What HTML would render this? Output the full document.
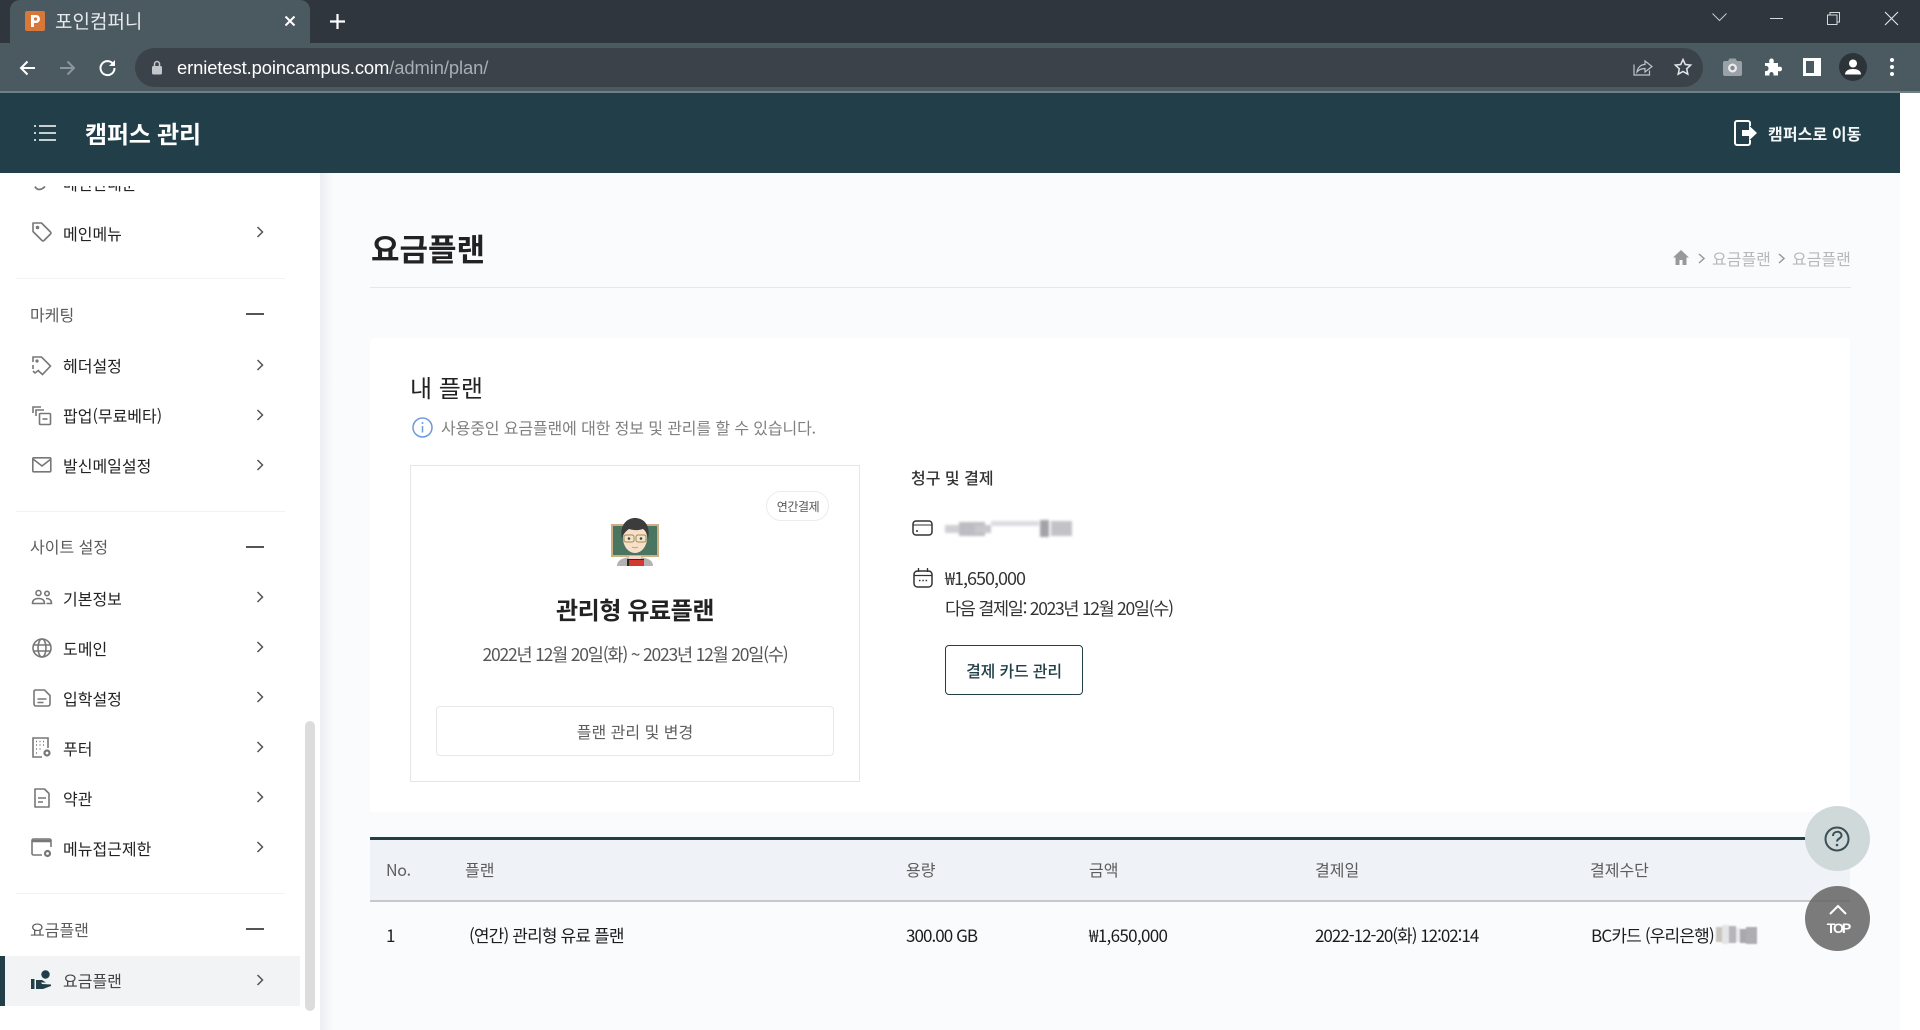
<!DOCTYPE html>
<html lang="ko"><head><meta charset="utf-8"><title>요금플랜</title>
<style>
*{box-sizing:border-box;margin:0;padding:0}
html,body{width:1920px;height:1030px;overflow:hidden;background:#fff;font-family:"Liberation Sans","Noto Sans CJK KR",sans-serif}
.a,.t,svg{position:absolute}
.t{line-height:0;white-space:nowrap;font-family:"Noto Sans CJK KR",sans-serif;font-size:16px;color:#333}
.c{transform:translateX(-50%)}
.si{color:#222;left:63px}
.sh{color:#5c5c5c;left:30px}
.th{color:#5c5c5c;top:869px}
.td{color:#1c1c1c;top:935px;font-size:17px}
svg{overflow:visible}
.g{fill:none;stroke:#777;stroke-width:1.6}
</style></head><body>
<!-- chrome -->
<div class="a" style="left:0;top:0;width:1920px;height:43px;background:#2f363d"></div>
<div class="a" style="left:0;top:43px;width:1920px;height:48px;background:#4b5961"></div>
<div class="a" style="left:0;top:91px;width:1920px;height:2px;background:#6f8088"></div>
<div class="a" style="left:10px;top:0;width:300px;height:43px;background:#4b5961;border-radius:10px 10px 0 0"></div>
<div class="a" style="left:135px;top:48px;width:1568px;height:39px;background:#3b4249;border-radius:20px"></div>
<div class="a" style="left:25px;top:11px;width:20px;height:20px;background:#d7773a;border-radius:2px"></div>
<svg style="left:25px;top:11px" width="20" height="20"><path d="M6 4h5a4 4 0 0 1 0 8H9v4H6z" fill="#fff"/><circle cx="10.500" cy="8" r="1.600" fill="#d7773a"/></svg>
<span class="t" style="left:55px;top:21px;font-size:19px;color:#e6e9eb">포인컴퍼니</span>
<svg style="left:284px;top:15px" width="12" height="12"><path d="M1.500 1.500l9 9M10.500 1.500l-9 9" stroke="#fff" stroke-width="2"/></svg>
<svg style="left:330px;top:14px" width="15" height="15"><path d="M7.500 0v15M0 7.500h15" stroke="#fff" stroke-width="2.200"/></svg>
<svg style="left:1712px;top:13px" width="15" height="9"><path d="M.5.500l7 7 7-7" fill="none" stroke="#c5cacd"/></svg>
<svg style="left:1770px;top:18px" width="13" height="2"><path d="M0 .5h13" stroke="#d5d9db"/></svg>
<svg style="left:1827px;top:12px" width="13" height="13"><path d="M.5 3h9.500v9.500H.5zM3 3V.5h9.500V10H10" fill="none" stroke="#d5d9db"/></svg>
<svg style="left:1885px;top:12px" width="13" height="13"><path d="M0 0l13 13M13 0L0 13" stroke="#e5e8ea" stroke-width="1.100"/></svg>
<svg style="left:19px;top:60px" width="17" height="16"><path d="M16 8H2M8.500 1.500L2 8l6.500 6.500" fill="none" stroke="#fff" stroke-width="2"/></svg>
<svg style="left:59px;top:60px" width="17" height="16"><path d="M1 8h14M8.500 1.500L15 8l-6.500 6.500" fill="none" stroke="#8b979e" stroke-width="2"/></svg>
<svg style="left:99px;top:59px" width="17" height="17"><path d="M14.500 5.500A7 7 0 1 0 15.500 9" fill="none" stroke="#fff" stroke-width="2"/><path d="M16 1v6h-6z" fill="#fff"/></svg>
<svg style="left:151px;top:60px" width="12" height="15"><rect x="1" y="6" width="10" height="8.500" rx="1.500" fill="#c3c7ca"/><path d="M3.500 6.500V4a2.500 2.500 0 0 1 5 0v2.500" fill="none" stroke="#c3c7ca" stroke-width="1.500"/></svg>
<span class="a" style="left:177px;top:56px;line-height:23px;font-size:18.400px;color:#fff;letter-spacing:-.1px;white-space:nowrap">ernietest.poincampus.com<span style="color:#a8aeb3">/admin/plan/</span></span>
<svg style="left:1633px;top:57px" width="20" height="19"><path d="M1 7.500V18h15.500v-4.500" fill="none" stroke="#c0c5c8" stroke-width="1.200"/><path d="M4 15c.5-4.500 4-7.500 8-7.500V4l7 5.500-7 5.500v-3.500c-3.500 0-6 1-8 3.500z" fill="none" stroke="#c0c5c8" stroke-width="1.200"/></svg>
<svg style="left:1674px;top:58px" width="18" height="18"><path d="M9 1.500l2.300 5 5.400.600-4 3.700 1.100 5.400L9 13.500l-4.800 2.700 1.100-5.400-4-3.700 5.400-.6z" fill="none" stroke="#e3e6e8" stroke-width="1.500"/></svg>
<svg style="left:1723px;top:58px" width="19" height="18"><path d="M0 5a2 2 0 0 1 2-2h3l1.500-2.500h6L14 3h3a2 2 0 0 1 2 2v11a2 2 0 0 1-2 2H2a2 2 0 0 1-2-2z" fill="#9aa2a7"/><circle cx="9.500" cy="10" r="4.500" fill="#e9ebec"/><circle cx="9.500" cy="10" r="2.200" fill="#808a90"/></svg>
<svg style="left:1764px;top:58px" width="18" height="18"><path d="M1 5h4.500c-1-3 .5-4.500 2-4.500s3 1.500 2 4.500H14v4c3-1 4 .5 4 2s-1 3-4 2v4.500H9.500c.5-2.500-1-3.500-2-3.500s-2.500 1-2 3.500H1V13c2.500.5 3.500-1 3.500-2.500S3.500 7.500 1 8z" fill="#fff"/></svg>
<div class="a" style="left:1803px;top:58px;width:18px;height:18px;background:#fff"></div>
<div class="a" style="left:1806px;top:61px;width:8px;height:12px;background:#4b5961"></div>
<div class="a" style="left:1839px;top:53px;width:28px;height:28px;border-radius:50%;background:#2c3339"></div>
<svg style="left:1845px;top:59px" width="16" height="16"><circle cx="8" cy="4.500" r="4" fill="#fff"/><path d="M0 15.500c0-4 4-5.500 8-5.500s8 1.500 8 5.500z" fill="#fff"/></svg>
<div class="a" style="left:1890px;top:58px;width:4px;height:4px;border-radius:50%;background:#fff"></div>
<div class="a" style="left:1890px;top:65px;width:4px;height:4px;border-radius:50%;background:#fff"></div>
<div class="a" style="left:1890px;top:72px;width:4px;height:4px;border-radius:50%;background:#fff"></div>
<!-- main bg -->
<div class="a" style="left:320px;top:173px;width:1580px;height:857px;background:#fafbfd"></div>
<div class="a" style="left:320px;top:173px;width:14px;height:857px;background:linear-gradient(90deg,#eceef1,#fafbfd)"></div>
<!-- header -->
<div class="a" style="left:0;top:93px;width:1900px;height:80px;background:#223f49"></div>
<svg style="left:34px;top:124px" width="22" height="18"><path d="M5 2h17M5 9h17M5 16h17" stroke="#fff" stroke-width="1.500"/><path d="M0 2h2M0 9h2M0 16h2" stroke="#fff" stroke-width="1.500"/></svg>
<span class="t" style="left:85px;top:133px;font-size:24px;font-weight:700;color:#fff;letter-spacing:-.2px">캠퍼스 관리</span>
<svg style="left:1734px;top:120px" width="24" height="26"><path d="M14 1H3a2 2 0 0 0-2 2v20a2 2 0 0 0 2 2h11a2 2 0 0 0 2-2v-3M16 6V3a2 2 0 0 0-2-2" fill="none" stroke="#fff" stroke-width="2"/><path d="M8 10h7V5.500l8 7.500-8 7.500V16H8z" fill="#fff"/></svg>
<span class="t" style="left:1768px;top:133px;font-weight:700;color:#f3f6f7;letter-spacing:.1px">캠퍼스로 이동</span>
<!-- sidebar -->
<div class="a" style="left:0;top:173px;width:320px;height:857px;background:#fff"></div>
<div class="a" style="left:0;top:186px;width:320px;height:10px;overflow:hidden">
  <span class="t" style="left:63px;top:-3px;color:#222">메인안내문</span>
  <svg style="left:34px;top:0" width="12" height="6"><path d="M1 .5c2 4 6 4 10 0" fill="none" stroke="#777" stroke-width="1.800"/></svg>
</div>
<svg class="g" style="left:32px;top:222px" width="20" height="20"><path d="M1 1h8.500l9 9a1.500 1.500 0 0 1 0 2l-6.500 6.500a1.500 1.500 0 0 1-2 0l-9-9z" stroke-linejoin="round"/><circle cx="5.500" cy="5.500" r="1" /></svg>
<span class="t si" style="top:233px">메인메뉴</span>
<div class="a" style="left:16px;top:278px;width:269px;height:1px;background:#f1f2f3"></div>
<span class="t sh" style="top:314px">마케팅</span>
<div class="a" style="left:246px;top:313px;width:18px;height:2px;background:#555"></div>
<svg class="g" style="left:32px;top:356px" width="20" height="20"><path d="M1 6V1h8.500l9 9-8 8.500L6 14.500M1 9v4" /><path d="M1 15l2 2 4-3" /><circle cx="5" cy="5" r=".8"/></svg>
<span class="t si" style="top:365px">헤더설정</span>
<svg class="g" style="left:32px;top:406px" width="20" height="20"><path d="M1 7V1h8M4 10V4h8"/><rect x="7.500" y="7.500" width="11" height="11" rx="1"/><path d="M10.500 13h5"/></svg>
<span class="t si" style="top:415px">팝업(무료베타)</span>
<svg class="g" style="left:32px;top:457px" width="20" height="16"><rect x=".8" y=".8" width="18" height="14" rx="1"/><path d="M1 2l9 7 9-7"/></svg>
<span class="t si" style="top:465px">발신메일설정</span>
<div class="a" style="left:16px;top:511px;width:269px;height:1px;background:#f1f2f3"></div>
<span class="t sh" style="top:546px">사이트 설정</span>
<div class="a" style="left:246px;top:546px;width:18px;height:2px;background:#555"></div>
<svg class="g" style="left:32px;top:590px" width="20" height="15" stroke-width="1.200"><circle cx="6.500" cy="3" r="2.500"/><circle cx="15" cy="3.500" r="2.200"/><path d="M.5 13.500c0-4 3-5 6-5s6 1 6 5zM14 8.500c3 0 5.500 1 5.500 5h-5"/></svg>
<span class="t si" style="top:598px">기본정보</span>
<svg class="g" style="left:32px;top:638px" width="20" height="20"><circle cx="10" cy="10" r="9"/><ellipse cx="10" cy="10" rx="4" ry="9"/><path d="M1.500 7h17M1.500 13h17"/></svg>
<span class="t si" style="top:648px">도메인</span>
<svg class="g" style="left:33px;top:689px" width="18" height="18"><path d="M2 1h9.500L17 6.500V15a2 2 0 0 1-2 2H3a2 2 0 0 1-2-2V2z"/><path d="M4.500 10h9M4.500 13.500h6"/></svg>
<span class="t si" style="top:698px">입학설정</span>
<svg class="g" style="left:32px;top:737px" width="20" height="21"><path d="M10 20H1V1h15v10M4 4.500h1M7.500 4.500h1M11 4.500h1M4 8h1M7.500 8h1M11 8h1M4 12h1M7.500 12h1M4 16h1"/><circle cx="15" cy="16" r="2.500" stroke-width="2.200"/></svg>
<span class="t si" style="top:748px">푸터</span>
<svg class="g" style="left:34px;top:788px" width="16" height="20"><path d="M1 1h9.500L15 5.500V19H1z" stroke-linejoin="round"/><path d="M4 10h8M4 14h5"/></svg>
<span class="t si" style="top:798px">약관</span>
<svg class="g" style="left:31px;top:838px" width="22" height="20"><path d="M11 17H2.500A1.500 1.500 0 0 1 1 15.500V2.500A1.500 1.500 0 0 1 2.500 1h16A1.500 1.500 0 0 1 20 2.500V9"/><path d="M1 3h19" stroke-width="2.500"/><circle cx="16.500" cy="15.500" r="2.500" stroke-width="2.200"/></svg>
<span class="t si" style="top:848px">메뉴접근제한</span>
<div class="a" style="left:16px;top:893px;width:269px;height:1px;background:#f1f2f3"></div>
<span class="t sh" style="top:929px">요금플랜</span>
<div class="a" style="left:246px;top:928px;width:18px;height:2px;background:#555"></div>
<div class="a" style="left:0;top:956px;width:300px;height:50px;background:#f2f3f4"></div>
<div class="a" style="left:0;top:956px;width:5px;height:50px;background:#223f49"></div>
<svg style="left:31px;top:970px" width="21" height="20"><circle cx="14.500" cy="4.500" r="4.200" fill="#223f49"/><rect x="0" y="9" width="3.500" height="10" fill="#223f49"/><path d="M5 10h6l4 2.500h-5l1 1.500 9 .500v1.500L12 19H5z" fill="#223f49"/></svg>
<span class="t si" style="top:980px;color:#444">요금플랜</span>
<svg style="left:0;top:0" width="320" height="1030"><path d="M257.500 227l5 5-5 5M257.500 360l5 5-5 5M257.500 410l5 5-5 5M257.500 460l5 5-5 5M257.500 592l5 5-5 5M257.500 642l5 5-5 5M257.500 692l5 5-5 5M257.500 742l5 5-5 5M257.500 792l5 5-5 5M257.500 842l5 5-5 5M257.500 975l5 5-5 5" fill="none" stroke="#555" stroke-width="1.500"/></svg>
<div class="a" style="left:305px;top:721px;width:10px;height:290px;background:#dcdcdc;border-radius:5px"></div>
<!-- page head -->
<span class="t" style="left:371px;top:248px;font-size:31px;font-weight:700;color:#222">요금플랜</span>
<div class="a" style="left:370px;top:287px;width:1481px;height:1px;background:#e6e7e9"></div>
<svg style="left:1673px;top:250px" width="16" height="15"><path d="M8 0L0 7.500h2.500V15h4v-5h3v5h4V7.500H16z" fill="#999"/></svg>
<svg style="left:1698px;top:253px" width="8" height="11"><path d="M1 1l5 4.500L1 10" fill="none" stroke="#999" stroke-width="1.500"/></svg>
<span class="t" style="left:1712px;top:258px;color:#b8b8b8">요금플랜</span>
<svg style="left:1778px;top:253px" width="8" height="11"><path d="M1 1l5 4.500L1 10" fill="none" stroke="#999" stroke-width="1.500"/></svg>
<span class="t" style="left:1792px;top:258px;color:#b8b8b8">요금플랜</span>
<!-- card -->
<div class="a" style="left:370px;top:338px;width:1480px;height:474px;background:#fff;border-radius:4px"></div>
<span class="t" style="left:410px;top:387px;font-size:24px;color:#222">내 플랜</span>
<svg style="left:412px;top:417px" width="21" height="21"><circle cx="10.500" cy="10.500" r="9.500" fill="none" stroke="#6f9ad8" stroke-width="1.500"/><path d="M10.500 9v6.500" stroke="#6f9ad8" stroke-width="1.500"/><circle cx="10.500" cy="6" r="1" fill="#6f9ad8"/></svg>
<span class="t" style="left:441px;top:427px;color:#808080;letter-spacing:-.12px">사용중인 요금플랜에 대한 정보 및 관리를 할 수 있습니다.</span>
<div class="a" style="left:410px;top:465px;width:450px;height:317px;border:1px solid #e6e6e6"></div>
<div class="a" style="left:766px;top:491px;width:63px;height:30px;border:1px solid #ececec;border-radius:15px"></div>
<span class="t c" style="left:798px;top:507px;font-size:12px;color:#555;letter-spacing:-.4px">연간결제</span>
<svg style="left:611px;top:518px" width="48" height="48">
<rect x="0" y="6" width="48" height="33" fill="#cfae84"/><rect x="2" y="8" width="44" height="29" fill="#4a7560"/>
<path d="M6 48c0-7 8-9 18-9s18 2 18 9z" fill="#b3b3b1"/><path d="M18 38h12v6H18z" fill="#f6d8cc"/>
<rect x="16" y="41" width="17" height="7" fill="#2a2a2a"/><rect x="18" y="42" width="15" height="6" fill="#d03a30"/>
<ellipse cx="24" cy="20" rx="12" ry="15" fill="#f7dfc8"/>
<path d="M11 21C8 7 16 0 24 0s16 6 13 21c-1-5-2-8-5-10-6 2-11 1-14 0-3 2-6 5-7 10z" fill="#3c3c3c"/>
<g fill="#f3e6c8" stroke="#a08a58" stroke-width="1"><rect x="13" y="17" width="10" height="7" rx="2"/><rect x="25" y="17" width="10" height="7" rx="2"/></g>
<circle cx="18" cy="20.500" r="1.300" fill="#444"/><circle cx="30" cy="20.500" r="1.300" fill="#444"/>
<path d="M21 29c1.500 1 4.500 1 6 0" fill="none" stroke="#c89a84"/></svg>
<span class="t c" style="left:635px;top:609px;font-size:24px;font-weight:700;color:#222;letter-spacing:-.4px">관리형 유료플랜</span>
<span class="t c" style="left:635px;top:655px;font-size:17.500px;color:#555;letter-spacing:-1.200px">2022년 12월 20일(화) ~ 2023년 12월 20일(수)</span>
<div class="a" style="left:436px;top:706px;width:398px;height:50px;border:1px solid #e8e8e8;border-radius:4px"></div>
<span class="t c" style="left:635px;top:731px;color:#5f5f5f">플랜 관리 및 변경</span>
<span class="t" style="left:911px;top:477px;font-weight:500;color:#333">청구 및 결제</span>
<svg style="left:912px;top:520px" width="21" height="16"><rect x="1" y="1" width="19" height="14" rx="3" fill="none" stroke="#333" stroke-width="1.500"/><path d="M1 5h19" stroke="#333"/><circle cx="5" cy="11" r="1" fill="#333"/></svg>
<svg style="left:945px;top:519px" width="127" height="18"><g style="filter:blur(1.200px)"><rect x="0" y="6" width="14" height="8" fill="#d0d0d4"/><rect x="14" y="3" width="26" height="14" fill="#bcbcc2"/><rect x="30" y="6" width="16" height="8" fill="#c8c8cc"/><rect x="46" y="2" width="48" height="5" fill="#dcdce0"/><rect x="95" y="1" width="9" height="17" fill="#a2a3a9"/><rect x="106" y="2" width="21" height="15" fill="#c2c2c7"/></g></svg>
<svg style="left:913px;top:568px" width="20" height="20"><rect x="1" y="3" width="18" height="16" rx="3.500" fill="none" stroke="#333" stroke-width="1.500"/><path d="M1 7.500h18M5.500 0v4M14.500 0v4" stroke="#333" stroke-width="1.300"/><path d="M6 12.500h1.500M9.300 12.500h1.500M12.600 12.500h1.500" stroke="#333" stroke-width="1.500"/></svg>
<span class="t" style="left:945px;top:578px;font-size:18px;color:#333;letter-spacing:-1px">₩1,650,000</span>
<span class="t" style="left:945px;top:609px;font-size:17.500px;color:#333;letter-spacing:-1.300px">다음 결제일: 2023년 12월 20일(수)</span>
<div class="a" style="left:945px;top:645px;width:138px;height:50px;border:1px solid #223f49;border-radius:4px"></div>
<span class="t c" style="left:1014px;top:670px;font-weight:500;color:#223f49;letter-spacing:-.2px">결제 카드 관리</span>
<!-- table -->
<div class="a" style="left:370px;top:837px;width:1480px;height:3px;background:#223f49"></div>
<div class="a" style="left:370px;top:840px;width:1480px;height:60px;background:#eff2f7"></div>
<div class="a" style="left:370px;top:900px;width:1480px;height:2px;background:#c5c7cb"></div>
<span class="t th" style="left:386px;letter-spacing:-.3px">No.</span>
<span class="t th" style="left:465px">플랜</span>
<span class="t th" style="left:906px">용량</span>
<span class="t th" style="left:1089px">금액</span>
<span class="t th" style="left:1315px">결제일</span>
<span class="t th" style="left:1590px">결제수단</span>
<span class="t td" style="left:386px">1</span>
<span class="t td" style="left:469px;letter-spacing:-.85px">(연간) 관리형 유료 플랜</span>
<span class="t td" style="left:906px;letter-spacing:-.94px">300.00 GB</span>
<span class="t td" style="left:1089px;letter-spacing:-.66px">₩1,650,000</span>
<span class="t td" style="left:1315px;letter-spacing:-1px">2022-12-20(화) 12:02:14</span>
<span class="t td" style="left:1591px;letter-spacing:-.84px">BC카드 (우리은행)</span>
<svg style="left:1716px;top:925px" width="41" height="19"><g style="filter:blur(.8px)"><rect x="0" y="2" width="6" height="15" fill="#c9c5bd"/><rect x="6" y="0" width="7" height="19" fill="#e4e4e6"/><rect x="13" y="1" width="7" height="17" fill="#b5b5ba"/><rect x="20" y="3" width="4" height="14" fill="#e8e8ea"/><rect x="24" y="4" width="6" height="14" fill="#a8a8ad"/><rect x="30" y="2" width="11" height="17" fill="#adadb2"/></g></svg>
<!-- floats -->
<div class="a" style="left:1805px;top:806px;width:65px;height:65px;border-radius:50%;background:#d0d9da"></div>
<svg style="left:1824px;top:826px" width="26" height="26"><circle cx="13" cy="13" r="11.500" fill="none" stroke="#3a4f57" stroke-width="2"/><path d="M9 10c0-5.500 8.500-5.500 8.500-.500 0 3-4.500 3-4.500 6" fill="none" stroke="#3a4f57" stroke-width="2"/><circle cx="13" cy="19" r="1.300" fill="#3a4f57"/></svg>
<div class="a" style="left:1805px;top:886px;width:65px;height:65px;border-radius:50%;background:rgba(100,100,100,.85)"></div>
<svg style="left:1829px;top:904px" width="18" height="11"><path d="M1 10l8-8 8 8" fill="none" stroke="#fff" stroke-width="2"/></svg>
<span class="t c" style="left:1838px;top:928px;font-size:14px;font-weight:700;color:#fff;letter-spacing:-2px;font-family:'Liberation Sans',sans-serif">TOP</span>
</body></html>
